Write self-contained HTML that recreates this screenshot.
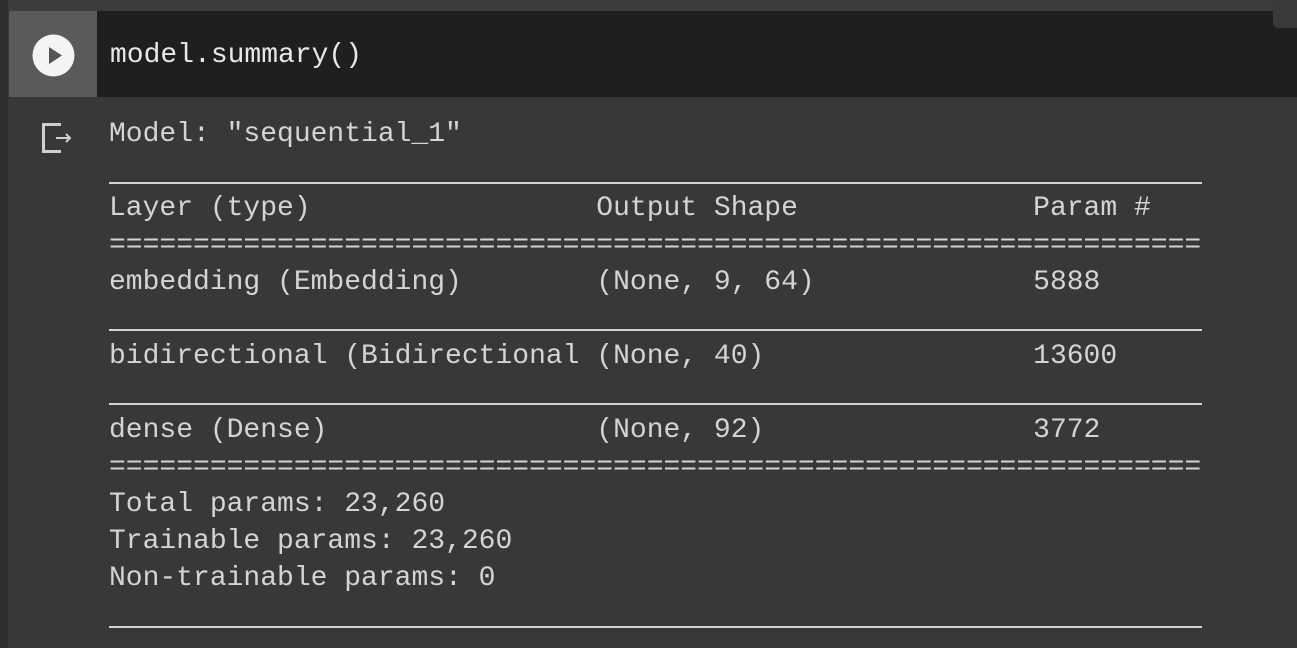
<!DOCTYPE html>
<html><head><style>
*{margin:0;padding:0}
body{width:1297px;height:648px;background:#383838;position:relative;overflow:hidden;font-family:"Liberation Mono",monospace;color:#d4d4d4}
.l{position:absolute;left:9px;top:11px;width:89px;height:86px;background:#5a5a5a}
.code{position:absolute;left:97px;top:11px;right:0;height:86px;background:#1f1f1f}
.edge{position:absolute;left:0;top:0;width:8px;height:648px;background:#2e2e2e}
.top{position:absolute;left:0;top:0;width:1297px;height:11px;background:#3c3c3c}
pre{position:absolute;left:109px;top:116px;font-size:28px;line-height:37px;font-family:"Liberation Mono",monospace;color:#d4d4d4}
.c{position:absolute;left:110px;top:37px;font-size:28px;line-height:37px;color:#e8e8e8;white-space:pre}
.cb{position:absolute;right:0;top:0;width:24px;height:28px;background:#3a3a3a;border-radius:0 0 0 5px}
.u{position:absolute;left:109px;width:1093px;height:2px;background:#d4d4d4}
</style></head><body>
<div class="top"></div>
<div class="edge"></div>
<div class="l"></div>
<div class="code"></div>
<div class="cb"></div>
<svg style="position:absolute;left:32px;top:34px" width="43" height="43"><circle cx="21.5" cy="21.5" r="21" fill="#f4f4f4"/><path d="M17 13 L30 21.5 L17 30 Z" fill="#555"/></svg>
<svg style="position:absolute;left:38px;top:120px" width="36" height="36"><path d="M23 4.5 H5.5 V31.5 H23" fill="none" stroke="#d0d0d0" stroke-width="3"/><path d="M18 18 H32 M28 14 L32 18 L28 22" fill="none" stroke="#d0d0d0" stroke-width="2"/></svg>
<div class="c">model.summary()</div>
<pre>Model: "sequential_1"

Layer (type)                 Output Shape              Param #   
=================================================================
embedding (Embedding)        (None, 9, 64)             5888      

bidirectional (Bidirectional (None, 40)                13600     

dense (Dense)                (None, 92)                3772      
=================================================================
Total params: 23,260
Trainable params: 23,260
Non-trainable params: 0
</pre>
<div class="u" style="top:182px"></div>
<div class="u" style="top:329px"></div>
<div class="u" style="top:403px"></div>
<div class="u" style="top:626px"></div>
</body></html>
